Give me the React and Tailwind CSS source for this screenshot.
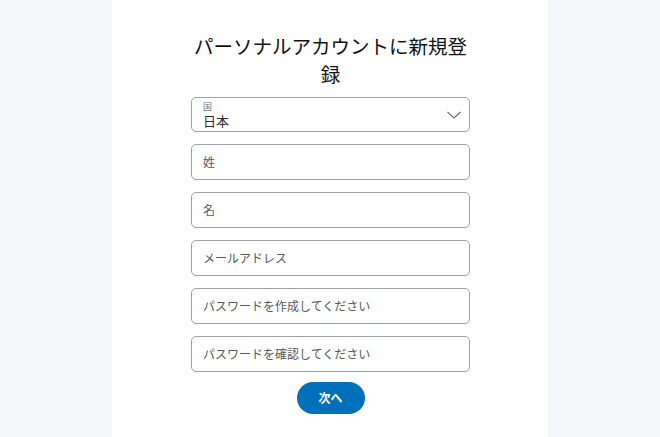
import React from "react";

const font = { fontFamily: '"Noto Sans CJK JP", "Noto Sans", sans-serif' };

function Field({ label }) {
  return (
    <div className="h-[36px] w-full rounded-[5px] border border-[#9da3a6] bg-white flex items-center px-[11px]">
      <span className="text-[12px] leading-[16px] text-[#55595c]">{label}</span>
    </div>
  );
}

export default function App() {
  return (
    <div className="w-[660px] h-[437px] bg-[#f5f7fa] flex justify-center overflow-hidden" style={font}>
      <div className="w-[436px] h-full bg-white flex flex-col items-center">
        <div className="w-[279px] ml-[1px] mt-[32px] flex flex-col items-center">
          <h1 className="text-[19.5px] leading-[28px] text-[#111] text-center font-normal">
            パーソナルアカウントに新規登録
          </h1>
          <div className="w-full mt-[9px] flex flex-col gap-[12px]">
            <div className="relative h-[35px] w-full rounded-[5px] border border-[#9da3a6] bg-white flex flex-col justify-center gap-[1px] px-[11px]">
              <span className="text-[9px] leading-[11px] text-[#6c7378]">国</span>
              <span className="text-[13px] leading-[16px] text-[#2c2e2f]">日本</span>
              <svg className="absolute right-[7px] top-[12px]" width="16" height="10" viewBox="0 0 16 10" fill="none">
                <path d="M1.5 2 L8 8 L14.5 2" stroke="#6c7378" strokeWidth="1.2" />
              </svg>
            </div>
            <Field label="姓" />
            <Field label="名" />
            <Field label="メールアドレス" />
            <Field label="パスワードを作成してください" />
            <Field label="パスワードを確認してください" />
          </div>
          <button className="mt-[10px] w-[68px] h-[32px] rounded-full bg-[#0070ba] text-white text-[12px] font-bold">
            次へ
          </button>
        </div>
      </div>
    </div>
  );
}
